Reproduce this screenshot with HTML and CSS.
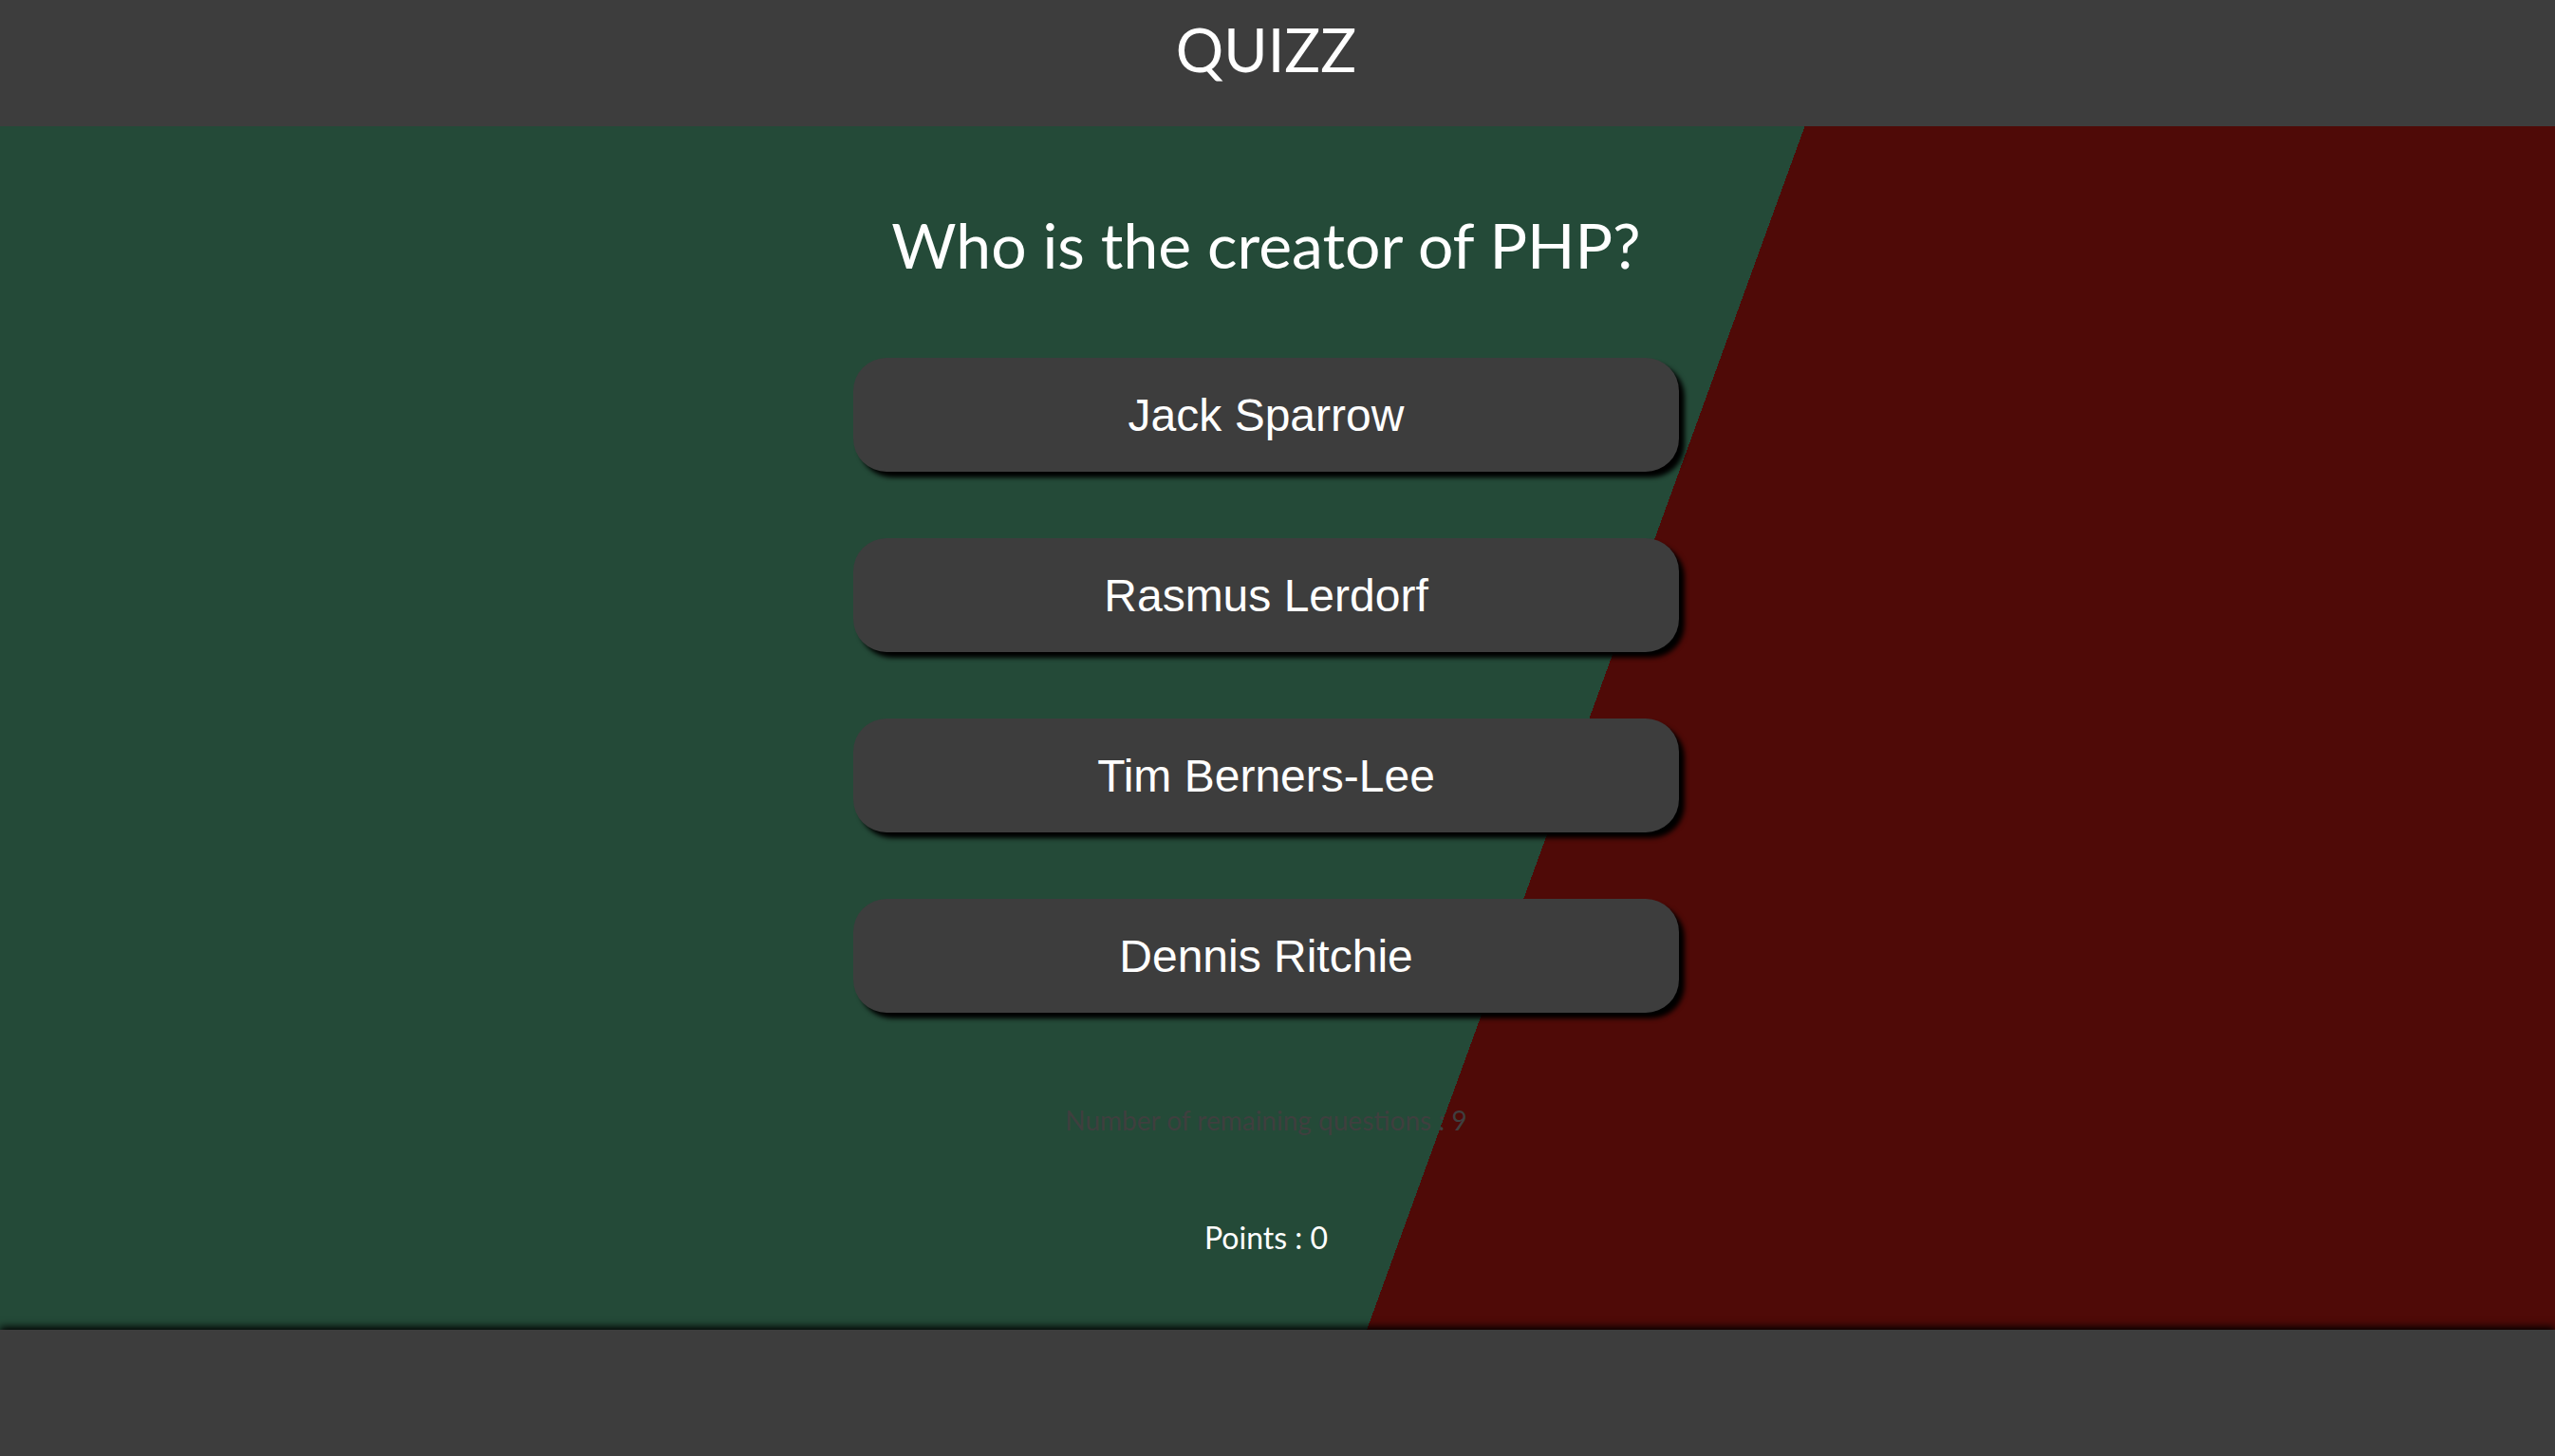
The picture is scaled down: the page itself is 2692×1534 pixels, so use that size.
FILE: index.html
```html
<!DOCTYPE html>
<html lang="en">
<head>
<meta charset="utf-8">
<title>QUIZZ</title>
<link rel="stylesheet" href="styles.css">
</head>
<body>
<header class="top">
  <h1 class="brand">QUIZZ</h1>
</header>
<main class="stage">
  <h2 class="question">Who is the creator of PHP?</h2>
  <div class="answers">
    <button class="answer">Jack Sparrow</button>
    <button class="answer">Rasmus Lerdorf</button>
    <button class="answer">Tim Berners-Lee</button>
    <button class="answer">Dennis Ritchie</button>
  </div>
  <p class="remaining">Number of remaining questions : 9</p>
  <p class="points">Points : 0</p>
</main>
<footer class="bottom"></footer>
</body>
</html>
```
FILE: styles.css
```css
* { box-sizing: border-box; }
html, body {
  margin: 0;
  padding: 0;
  background: #3d3d3d;
}
body {
  font-family: "Lato", "Open Sans", sans-serif;
  color: #fff;
  width: 2692px;
  height: 1534px;
  overflow: hidden;
}
.top {
  height: 133px;
  background: #3d3d3d;
  display: flex;
  justify-content: center;
  padding: 20px 24px 0 0;
}
.brand {
  margin: 0;
  font-weight: 400;
  font-size: 63px;
  line-height: 63px;
}
.stage {
  height: 1268px;
  background: linear-gradient(110deg, #244a38 60.3%, #4f0a07 60.3%);
  display: flex;
  flex-direction: column;
  align-items: center;
  padding: 92px 24px 0 0;
}
.question {
  margin: 0;
  font-weight: 400;
  font-size: 66px;
  line-height: 66px;
}
.answers {
  margin-top: 86px;
  display: flex;
  flex-direction: column;
  gap: 70px;
}
.answer {
  width: 870px;
  height: 120px;
  border: none;
  border-radius: 35px;
  background: #3d3d3d;
  color: #fff;
  font-family: "Liberation Sans", Arial, sans-serif;
  font-size: 48px;
  box-shadow: 6px 6px 5px #000;
  padding: 0;
}
.remaining {
  margin: 99px 0 0;
  font-size: 28px;
  line-height: 28px;
  color: #3f3f3f;
}
.points {
  margin: 94px 0 0;
  font-size: 32px;
  line-height: 32px;
}
.bottom {
  position: relative;
  height: 133px;
  background: #3d3d3d;
  box-shadow: 0 -3px 8px #000;
}
```
